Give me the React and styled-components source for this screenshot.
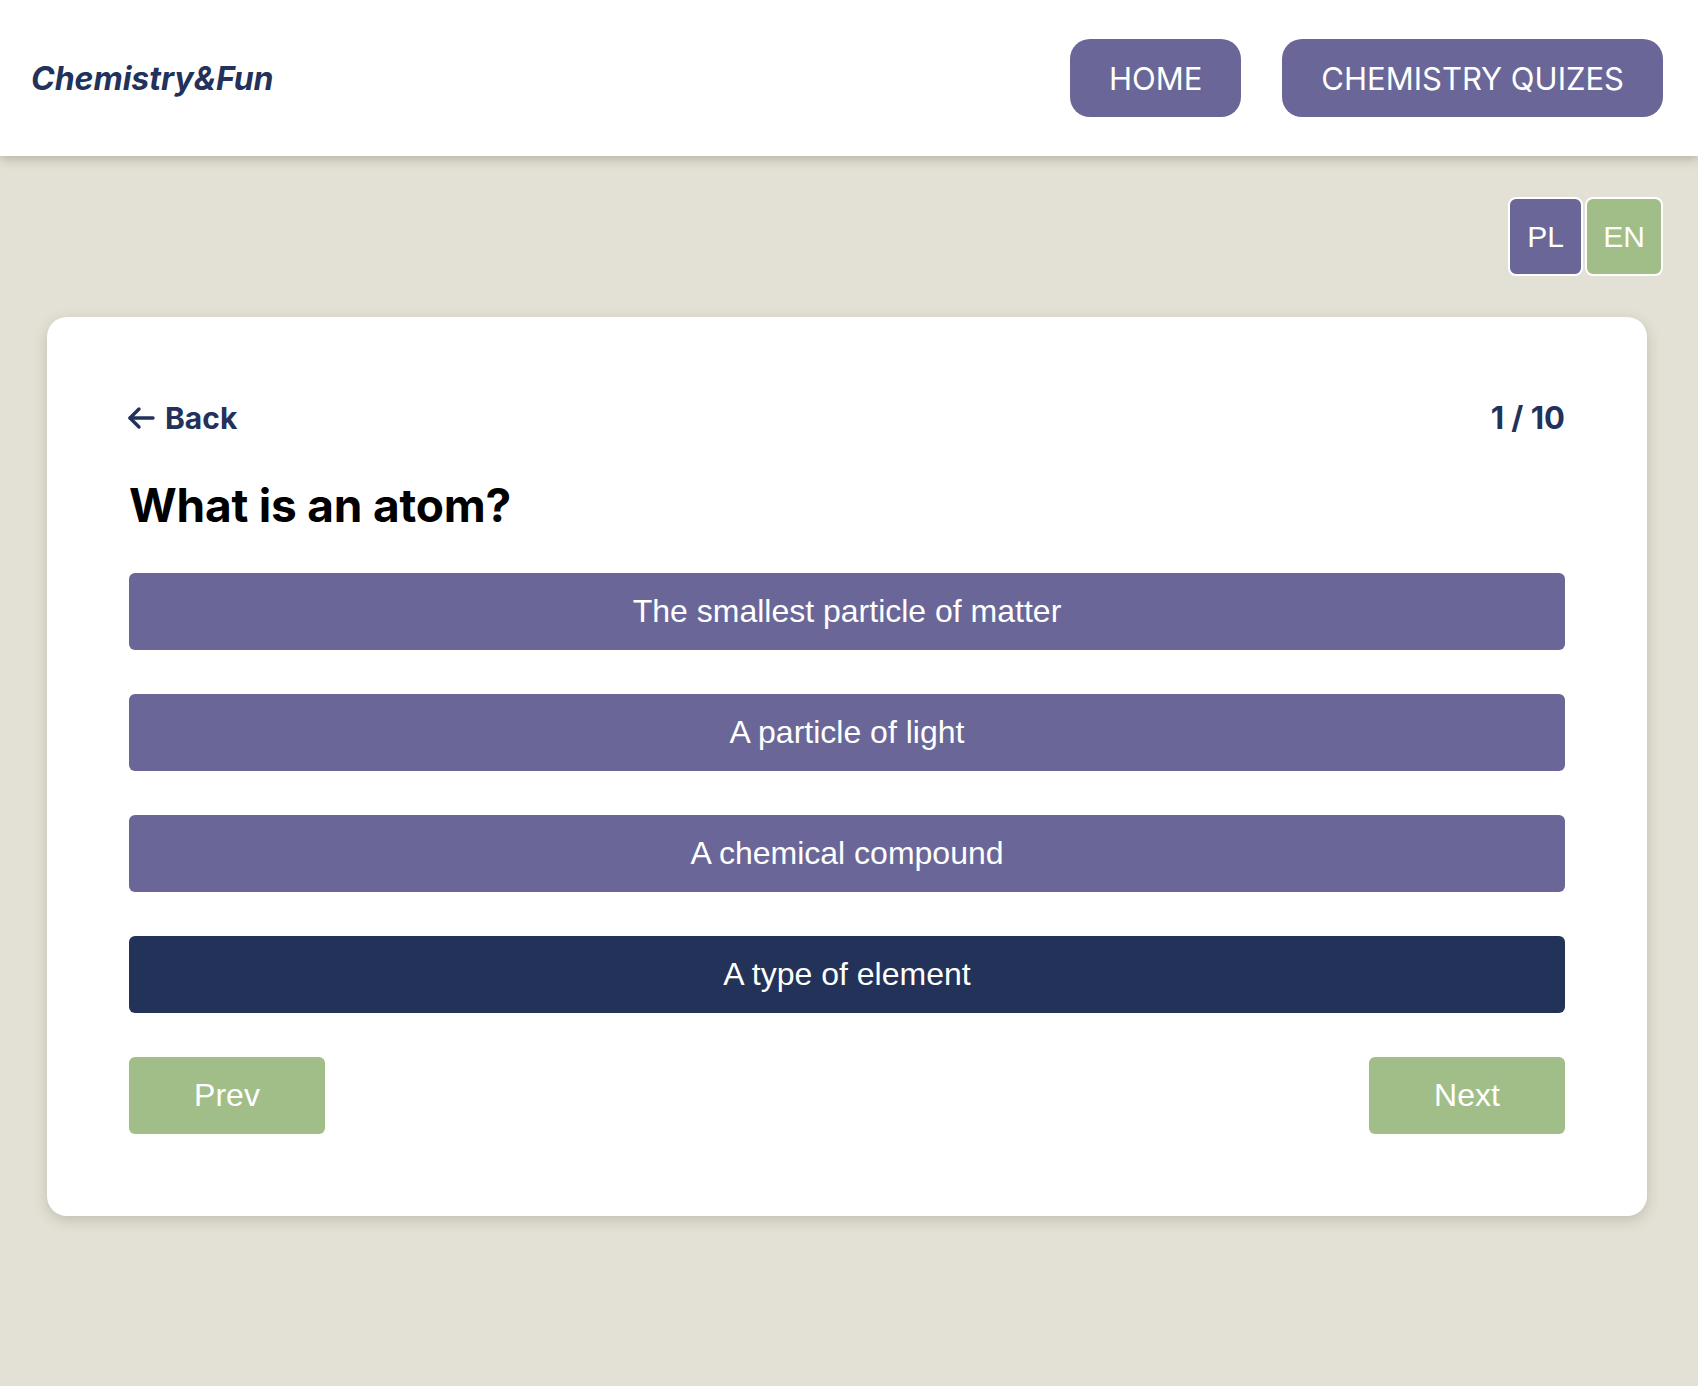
import { useState } from "react";
import styled, { createGlobalStyle } from "styled-components";

const GlobalStyle = createGlobalStyle`
	html, body {
		margin: 0;
		background: #e3e1d5;
	}
	* {
		box-sizing: border-box;
	}
`;

const Header = styled.header`
	height: 156px;
	background: #fff;
	display: flex;
	align-items: center;
	justify-content: space-between;
	padding: 0 35px 0 31px;
	box-shadow: 0 3px 10px rgba(60, 55, 30, 0.28);
	position: relative;
`;
const Logo = styled.div`
	font-family: Inter, "Noto Sans", sans-serif;
	font-weight: 700;
	font-style: italic;
	font-size: 32px;
	color: #22325a;
`;
const Nav = styled.nav`
	display: flex;
	gap: 41px;
`;
const NavButton = styled.div`
	height: 78px;
	padding: 0 39px;
	display: flex;
	align-items: center;
	background: #6a6798;
	color: #fff;
	border-radius: 20px;
	font-family: Inter, "Noto Sans", sans-serif;
	font-size: 31px;
	cursor: pointer;
`;
const Main = styled.main`
	padding: 41px 35px 40px;
`;
const LangRow = styled.div`
	display: flex;
	justify-content: flex-end;
	gap: 2px;
`;
const LangButton = styled.div`
	width: ${p => p.w}px;
	height: 79px;
	display: flex;
	align-items: center;
	justify-content: center;
	border: 2px solid #fff;
	border-radius: 8px;
	background: ${p => p.active ? "#a2be88" : "#6a6798"};
	color: #fff;
	font-family: "Liberation Sans", Arial, sans-serif;
	font-size: 30px;
	cursor: pointer;
`;
const Card = styled.section`
	width: 1600px;
	margin: 41px 0 0 12px;
	background: #fff;
	border-radius: 20px;
	padding: 82px;
	box-shadow: 0 4px 14px rgba(60, 55, 30, 0.2);
	display: flex;
	flex-direction: column;
`;
const TopRow = styled.div`
	display: flex;
	justify-content: space-between;
	align-items: center;
	font-family: Inter, "Noto Sans", sans-serif;
	font-weight: 700;
	font-size: 30px;
	color: #22325a;
`;
const BackLink = styled.div`
	display: flex;
	align-items: center;
	gap: 9px;
	cursor: pointer;
	svg {
		margin-left: -2px;
	}
`;
const Counter = styled.div`
	font-size: 31px;
`;
const Question = styled.h1`
	margin: 41px 0 40px;
	font-family: Inter, "Noto Sans", sans-serif;
	font-weight: 700;
	font-size: 46px;
	letter-spacing: -0.2px;
	color: #000;
`;
const Answers = styled.div`
	display: flex;
	flex-direction: column;
	gap: 44px;
`;
const Answer = styled.div`
	height: 77px;
	border-radius: 6px;
	display: flex;
	align-items: center;
	justify-content: center;
	background: ${p => p.selected ? "#233259" : "#6a6798"};
	color: #fff;
	font-family: "Liberation Sans", Arial, sans-serif;
	font-size: 32px;
	cursor: pointer;
`;
const Footer = styled.div`
	display: flex;
	justify-content: space-between;
	margin-top: 44px;
`;
const StepButton = styled.div`
	width: 196px;
	height: 77px;
	border-radius: 6px;
	background: #a2be88;
	color: #fff;
	display: flex;
	align-items: center;
	justify-content: center;
	font-family: "Liberation Sans", Arial, sans-serif;
	font-size: 32px;
	cursor: pointer;
`;

const ArrowLeft = () => (
	<svg width="29" height="24" viewBox="0 0 29 24" fill="none" stroke="currentColor" strokeWidth="3.4" strokeLinecap="round" strokeLinejoin="round">
		<path d="M26 12H3" />
		<path d="M12 3 3 12l9 9" />
	</svg>
);

const answers = [
	"The smallest particle of matter",
	"A particle of light",
	"A chemical compound",
	"A type of element",
];

const App = () => {
	const [selected, setSelected] = useState(3);
	const [lang, setLang] = useState("EN");

	return (
		<>
			<GlobalStyle />
			<Header>
				<Logo>Chemistry&amp;Fun</Logo>
				<Nav>
					<NavButton>HOME</NavButton>
					<NavButton>CHEMISTRY QUIZES</NavButton>
				</Nav>
			</Header>
			<Main>
				<LangRow>
					<LangButton w={75} active={lang === "PL"} onClick={() => setLang("PL")}>PL</LangButton>
					<LangButton w={78} active={lang === "EN"} onClick={() => setLang("EN")}>EN</LangButton>
				</LangRow>
				<Card>
					<TopRow>
						<BackLink><ArrowLeft />Back</BackLink>
						<Counter>1 / 10</Counter>
					</TopRow>
					<Question>What is an atom?</Question>
					<Answers>
						{answers.map((a, i) => (
							<Answer key={a} selected={selected === i} onClick={() => setSelected(i)}>{a}</Answer>
						))}
					</Answers>
					<Footer>
						<StepButton>Prev</StepButton>
						<StepButton>Next</StepButton>
					</Footer>
				</Card>
			</Main>
		</>
	);
};

export default App;
